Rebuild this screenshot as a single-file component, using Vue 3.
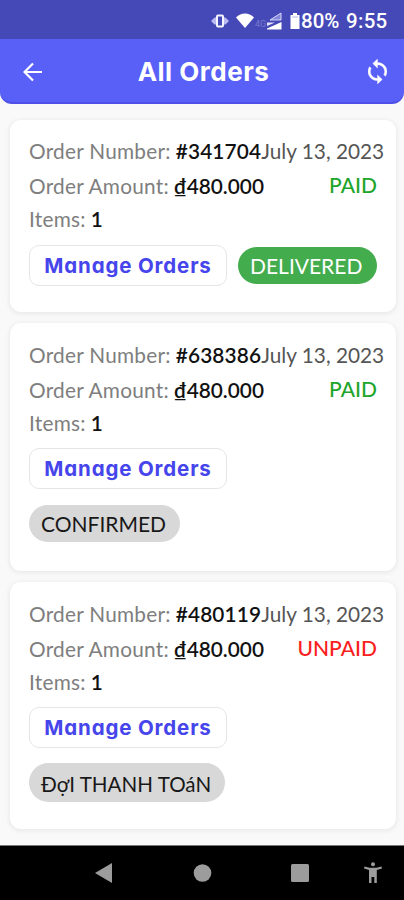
<script setup>
const orders = [
  { number: '#341704', payment: 'PAID', status: 'DELIVERED', kind: 'delivered' },
  { number: '#638386', payment: 'PAID', status: 'CONFIRMED', kind: 'confirmed' },
  { number: '#480119', payment: 'UNPAID', status: 'ĐợI THANH TOáN', kind: 'pending' },
]
</script>

<template>
  <main class="screen">
    <header class="statusbar">
      <svg class="vibrate" viewBox="0 0 18 14"><path d="M0 7 3.500 3.500h2v7h-2ZM18 7l-3.500-3.500h-2v7h2Z" fill="#b9baf0"/><rect x="6" y="1.500" width="6" height="11" rx="1" fill="#4549b7" stroke="#f5f5ff" stroke-width="2"/></svg>
      <svg class="wifi" viewBox="0 0 18 15"><path d="M0 4.500C5-.9 13-.9 18 4.500L9 15Z" fill="#fff"/></svg>
      <span class="network">4G</span>
      <svg class="signal" viewBox="0 0 15 18"><path d="M14 1v7H3Z" fill="#8587d8" stroke="#d5d6fa"/><path d="M0 16.500 14.500 10v7.500H0Z" fill="#fff"/><path d="M0 10.500h8L0 14Z" fill="#e3e3fb"/></svg>
      <svg class="battery" viewBox="0 0 10 16"><path d="M3 0h4v2h2.500v14h-9V2H3Z" fill="#fff"/><path d="M2 4h6" stroke="#b4b5e9"/></svg>
      <b class="percent">80%</b>
      <b class="clock">9:55</b>
    </header>
    <nav class="appbar">
      <svg class="back" viewBox="0 0 20 20"><path d="M19 10H2M10 1.500 1.500 10l8.500 8.500" fill="none" stroke="#fff" stroke-width="2.200"/></svg>
      <h1>All Orders</h1>
      <svg class="sync" viewBox="4 1 16 22" preserveAspectRatio="none"><path fill="#fff" stroke="#fff" stroke-width=".3" d="M12 4V1L8 5l4 4V6c3.310 0 6 2.690 6 6 0 1.010-.25 1.970-.7 2.800l1.460 1.460A7.930 7.930 0 0 0 20 12c0-4.420-3.580-8-8-8zm0 14c-3.310 0-6-2.690-6-6 0-1.010.25-1.970.7-2.800L5.240 7.740A7.930 7.930 0 0 0 4 12c0 4.420 3.580 8 8 8v3l4-4-4-4v3z"/></svg>
    </nav>
    <section class="orders">
      <article v-for="order in orders" :key="order.number" class="card" :class="order.kind">
        <div class="row number"><span class="label">Order Number:</span><b>{{ order.number }}</b><span class="date">July 13, 2023</span></div>
        <div class="row amount"><span class="label">Order Amount:</span><b>₫480.000</b><span class="payment" :class="{ unpaid: order.payment === 'UNPAID' }">{{ order.payment }}</span></div>
        <div class="row items"><span class="label">Items:</span><b>1</b></div>
        <div class="actions">
          <button>Manage Orders</button>
          <span class="pill">{{ order.status }}</span>
        </div>
      </article>
    </section>
    <footer class="navbar">
      <svg viewBox="0 0 404 55">
        <g fill="#9c9c9c"><path d="M95 28 112 18v20Z"/><circle cx="202.500" cy="28" r="8.800"/><rect x="291" y="19" width="18" height="18" rx="1.500"/><circle cx="373" cy="19.200" r="2"/><path d="m364.500 21.500 5 1.300h7l5-1.300.5 2-5.200 1.500v13h-2.500v-6h-2.800v6H369V25l-5-1.500Z"/></g>
      </svg>
    </footer>
  </main>
</template>

<style>
body { margin: 0; overflow: hidden; }
</style>

<style scoped>
* { box-sizing: border-box; }
.screen { width: 404px; height: 900px; display: flex; flex-direction: column; background: #f9f9f9; font-family: Lato, sans-serif; overflow: hidden; }
svg { display: block; flex: none; }
.statusbar { height: 39px; flex: none; background: #4549b7; display: flex; align-items: center; padding: 2px 0 0 211px; color: #fff; font-family: Roboto, sans-serif; }
.vibrate { width: 18px; height: 14px; }
.wifi { width: 18px; height: 15px; margin-left: 7px; }
.network { width: 13px; margin-top: 7px; font-size: 9px; color: #7779cd; text-align: center; }
.signal { width: 15px; height: 18px; }
.battery { width: 10px; height: 16px; margin-left: 8px; }
.percent, .clock { font-size: 20.5px; font-weight: 500; line-height: 24px; white-space: nowrap; }
.percent { width: 45px; margin-left: 1px; }
.clock { letter-spacing: .3px; }
.appbar { height: 65px; flex: none; display: flex; align-items: center; background: #5960f8; border-radius: 0 0 12px 12px; border-bottom: 2px solid #4e50e8; padding: 2px 17px 0 23px; }
.back { width: 20px; height: 20px; }
h1 { flex: 1; margin: 0; padding-right: 4px; color: #fff; text-align: center; font: 700 26px/36px Inter, sans-serif; letter-spacing: .5px; font-feature-settings: "cv11"; }
.sync { width: 19px; height: 25px; }
.orders { flex: 1; min-height: 0; padding: 16px 8px 0 10px; display: flex; flex-direction: column; gap: 11px; }
.card { height: 192px; flex: none; background: #fff; border-radius: 11px; padding: 13px 12px 0 19px; box-shadow: 0 1px 4px 1px #e9e9e9; }
.card.confirmed { height: 248px; padding-top: 14px; }
.card.pending { height: 247px; padding-top: 14px; }
.row { height: 35px; display: flex; align-items: center; font-size: 20.8px; line-height: 34px; white-space: nowrap; color: #111; }
.row b { font-weight: 600; margin-left: 5px; letter-spacing: .15px; }
.amount b { letter-spacing: 0; }
.label { color: #7e7e7e; letter-spacing: .25px; }
.items { height: 32px; }
.date { color: #555; }
.payment { margin-left: auto; margin-right: 7px; margin-top: -1px; color: #20a52b; font-weight: 500; font-size: 21px; }
.unpaid { color: #f92020; }
.actions { margin-top: 9px; display: flex; flex-wrap: wrap; gap: 16px 12px; align-items: center; }
.delivered .actions { margin-top: 10px; column-gap: 11px; }
button { width: 198px; height: 41px; padding: 0; border: 1px solid #e6e6e6; border-radius: 10px; background: #fff; color: #4645ec; font: 700 20.5px/39px Inter, sans-serif; letter-spacing: .85px; font-feature-settings: "cv11"; white-space: nowrap; }
.pill { height: 37px; padding: 0 12px; border-radius: 20px; background: #d8d8d8; color: #181818; line-height: 38px; font-size: 21px; white-space: nowrap; }
.delivered .pill { width: 139px; background: #43ac4d; color: #fff; }
.confirmed .pill { width: 151px; }
.pending .pill { width: 196px; height: 39px; line-height: 42px; font-size: 20.6px; }
.pending .actions { row-gap: 15px; }
.navbar { height: 55px; flex: none; background: #000; border-top: 1px solid #777; }
.navbar svg { width: 404px; height: 55px; margin-top: -1px; }
</style>
